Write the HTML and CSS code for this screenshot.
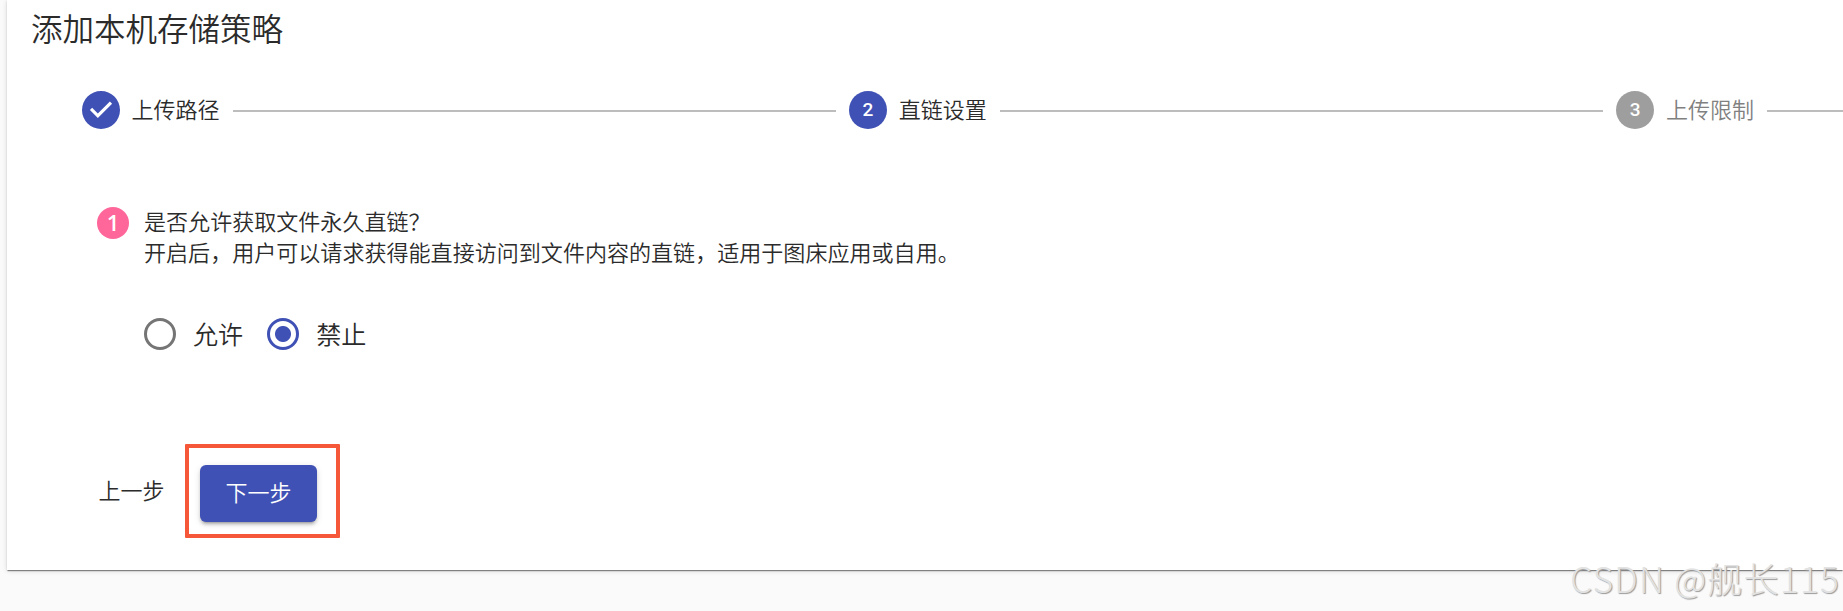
FILE: index.html
```html
<!DOCTYPE html>
<html lang="zh-CN">
<head>
    <meta charset="UTF-8">
    <meta name="viewport" content="width=device-width, initial-scale=1.0">
    <title>添加本机存储策略</title>
    <link rel="stylesheet" href="styles.css">
</head>
<body>
    <div class="card">
        <h1>添加本机存储策略</h1>

        <div class="stepper">
            <div class="step">
                <svg class="step-icon" viewBox="0 0 24 24">
                    <path fill="#3f51b5" d="M12 0a12 12 0 1 0 0 24 12 12 0 0 0 0-24zm-2 17l-5-5 1.4-1.4 3.6 3.6 7.6-7.6L19 8l-9 9z"/>
                </svg>
                <span class="step-label">上传路径</span>
                <span class="step-line"></span>
            </div>
            <div class="step">
                <span class="step-icon step-number">2</span>
                <span class="step-label">直链设置</span>
                <span class="step-line"></span>
            </div>
            <div class="step disabled">
                <span class="step-icon step-number">3</span>
                <span class="step-label">上传限制</span>
                <span class="step-line"></span>
            </div>
        </div>

        <form class="content">
            <div class="question">
                <span class="badge">1</span>
                <p>是否允许获取文件永久直链？<br>开启后，用户可以请求获得能直接访问到文件内容的直链，适用于图床应用或自用。</p>
            </div>

            <div class="radio-group">
                <label><input type="radio" name="direct"><span>允许</span></label>
                <label><input type="radio" name="direct" checked><span>禁止</span></label>
            </div>

            <div class="actions">
                <button type="button" class="btn-prev">上一步</button>
                <div class="highlight">
                    <button type="button" class="btn-next">下一步</button>
                </div>
            </div>
        </form>
    </div>

    <div class="watermark">CSDN @舰长115</div>
</body>
</html>
```

FILE: styles.css
```css
* {
    margin: 0;
    padding: 0;
    box-sizing: border-box;
}

body {
    font-family: "Noto Sans CJK SC", sans-serif;
    font-weight: 350;
    background-color: #fafafa;
    color: #2b2b2b;
    height: 611px;
    overflow: hidden;
}

/* Tarjeta principal */
.card {
    height: 570px;
    margin-left: 7px;
    padding-left: 24px;
    background-color: #fff;
    box-shadow: 0 2px 1px -1px rgba(0, 0, 0, 0.3), 0 1px 1px rgba(0, 0, 0, 0.2), 0 1px 5px rgba(0, 0, 0, 0.14);
}

h1 {
    padding-top: 4px;
    font-size: 31.5px;
    font-weight: 350;
    line-height: 47px;
}

/* Pasos */
.stepper {
    display: flex;
    padding: 40px 0 0 50.5px;
}

.step {
    display: flex;
    align-items: center;
    flex: 0 0 767.3px;
}

.step:last-child {
    flex: 1;
}

.step-icon {
    flex: none;
    width: 38px;
    height: 38px;
}

.step-number {
    border-radius: 50%;
    background-color: #3f51b5;
    color: #fff;
    font-family: Roboto, sans-serif;
    font-size: 19px;
    font-weight: 500;
    line-height: 38px;
    text-align: center;
}

.step-label {
    flex: none;
    margin: 0 13px 5px 12px;
    font-size: 22px;
    line-height: 32px;
}

.step-line {
    flex: 1;
    height: 2px;
    margin: 2px 13px 0 0;
    background-color: #bdbdbd;
}

.step:last-child .step-line {
    margin-right: 0;
}

.disabled .step-number {
    background-color: #9e9e9e;
}

.disabled .step-label {
    color: #808080;
}

/* Contenido */
.content {
    padding: 78px 0 0 66px;
}

.question {
    display: flex;
    gap: 15px;
    font-size: 22.05px;
    line-height: 31.4px;
}

.question p {
    margin-top: -2px;
}

.badge {
    width: 32px;
    height: 32px;
    border-radius: 50%;
    background-color: #ff6699;
    color: #fff;
    font-family: "Open Sans", sans-serif;
    font-weight: 600;
    line-height: 30px;
    text-align: center;
}

.radio-group {
    display: flex;
    gap: 24px;
    padding: 46px 0 0 47px;
}

.radio-group label {
    display: flex;
    align-items: center;
    gap: 17px;
    font-size: 25.1px;
    line-height: 38px;
}

.radio-group span {
    margin-bottom: 3px;
}

input[type="radio"] {
    appearance: none;
    width: 32px;
    height: 32px;
    border: 3px solid #757575;
    border-radius: 50%;
}

input[type="radio"]:checked {
    border-color: #3f51b5;
    background: radial-gradient(circle, #3f51b5 7.5px, transparent 8.5px);
}

/* Botones */
.actions {
    display: flex;
    align-items: center;
    padding-top: 89px;
}

button {
    border: none;
    background: none;
    color: #2b2b2b;
    font-family: inherit;
    font-size: 22px;
    font-weight: 350;
    line-height: 32px;
}

.btn-prev {
    width: 69px;
    padding-bottom: 3px;
}

/* Marco rojo del botón siguiente */
.highlight {
    margin-left: 19px;
    width: 155px;
    height: 94px;
    padding: 17px 0 0 11px;
    border: 4px solid #f55738;
    border-radius: 1px;
}

.btn-next {
    width: 117px;
    height: 57px;
    padding-bottom: 5px;
    border-radius: 6px;
    background-color: #3f51b5;
    color: #fff;
    box-shadow: 0 4px 2px -3px rgba(0, 0, 0, 0.2), 0 3px 3px rgba(0, 0, 0, 0.14), 0 2px 7px rgba(0, 0, 0, 0.12);
}

/* Marca de agua */
.watermark {
    position: absolute;
    right: 3px;
    bottom: 8px;
    color: #e2e2e2;
    font-size: 35px;
    font-weight: 300;
    line-height: 50px;
    letter-spacing: 1.3px;
    white-space: nowrap;
    text-shadow: 1px 1px 1px #999;
}
```
